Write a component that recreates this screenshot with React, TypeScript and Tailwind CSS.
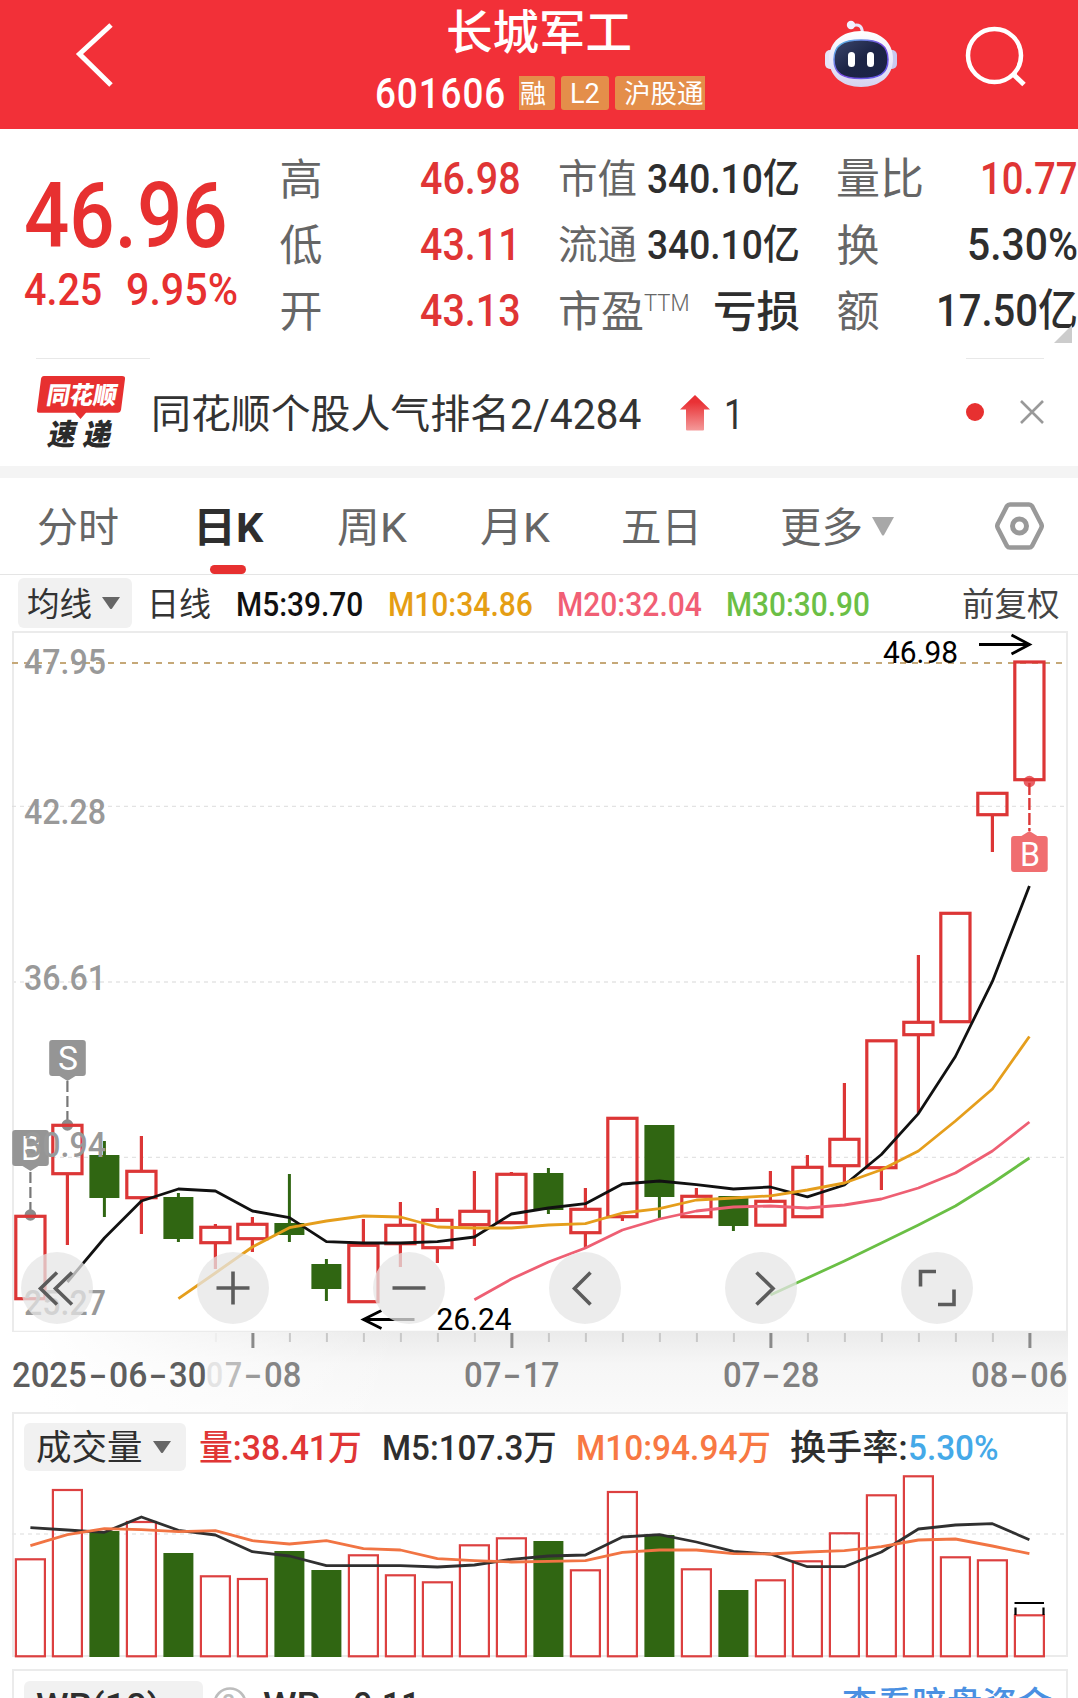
import { useLayoutEffect, useRef, useState } from "react";
import type { ReactNode } from "react";

/* Text condensed or widened to an exact run length. */
function Fit({ w, className = "", children }: { w: number; className?: string; children: ReactNode }) {
  const ref = useRef<HTMLSpanElement>(null);
  const [scale, setScale] = useState(1);
  useLayoutEffect(() => {
    if (ref.current) setScale(w / ref.current.offsetWidth);
  }, [w]);
  return (
    <span className={`block shrink-0 leading-none ${className}`} style={{ width: w }}>
      <span ref={ref} className="inline-block origin-left whitespace-nowrap" style={{ transform: `translateY(0.05em) scaleX(${scale})` }}>
        {children}
      </span>
    </span>
  );
}

const X0 = 30.4;
const STEP = 37;
const cx = (i: number) => X0 + i * STEP;
const pts = (start: number, ys: number[]) => ys.map((y, i) => `${cx(start + i)},${y}`).join(" ");

const RED = "#dc3636";
const GREEN = "#306612";

/* [up, body top, body bottom, wick top, wick bottom] */
const candles: [boolean, number, number, number, number][] = [
  [true, 1215, 1300, 1215, 1300],
  [true, 1124, 1175, 1124, 1245],
  [false, 1155, 1198, 1141, 1217],
  [true, 1170, 1199, 1136, 1234],
  [false, 1197, 1239, 1193, 1242],
  [true, 1226, 1244, 1224, 1269],
  [true, 1223, 1240, 1217, 1252],
  [false, 1223, 1235, 1174, 1242],
  [false, 1264, 1289, 1259, 1301],
  [true, 1244, 1303, 1219, 1303],
  [true, 1224, 1245, 1202, 1267],
  [true, 1219, 1249, 1208, 1263],
  [true, 1210, 1226, 1171, 1246],
  [true, 1173, 1224, 1172, 1224],
  [false, 1173, 1210, 1168, 1214],
  [true, 1208, 1234, 1188, 1247],
  [true, 1117, 1218, 1117, 1221],
  [false, 1125, 1197, 1125, 1218],
  [true, 1195, 1218, 1188, 1218],
  [false, 1196, 1226, 1196, 1231],
  [true, 1200, 1226.5, 1171, 1226.5],
  [true, 1166, 1218, 1155, 1218],
  [true, 1138, 1167, 1083, 1183],
  [true, 1039.5, 1169, 1039.5, 1190],
  [true, 1021, 1036, 955, 1113],
  [true, 912, 1023, 912, 1023],
  [true, 792, 816, 792, 852],
  [true, 660.7, 781, 660.7, 781],
];

const ma5 = [1282, 1238, 1201, 1189, 1191, 1211, 1217.7, 1241.7, 1243, 1243, 1241.7, 1237, 1214, 1208, 1203.7, 1184, 1181, 1184.7, 1189, 1187, 1196.8, 1185, 1154.5, 1113.6, 1056.5, 981.4, 886];
const ma10 = [1298.7, 1273, 1247, 1227.7, 1221, 1216, 1217, 1227, 1228, 1228, 1225, 1223.7, 1213, 1208.7, 1200, 1198, 1195.8, 1190, 1183, 1169.7, 1151, 1121, 1089, 1036.5];
const ma20 = [1299.7, 1279, 1262, 1248, 1230, 1219, 1211, 1207, 1206, 1208, 1205, 1199, 1188, 1173, 1151, 1122];
const ma30 = [1295, 1278, 1261, 1243, 1225, 1206, 1183, 1158];

const volTops = [1558.3, 1489, 1531, 1521, 1553, 1575.3, 1578, 1551, 1570, 1554.3, 1574.3, 1581.3, 1544.3, 1537.3, 1541, 1569.3, 1491, 1535, 1568.3, 1590, 1579.3, 1560.3, 1532.3, 1494.3, 1475.3, 1556.3, 1559.3, 1614.3];
const vol5 = [1527.7, 1530, 1532.3, 1517, 1530.3, 1535, 1551.7, 1556, 1565.7, 1565.7, 1565.7, 1567, 1565, 1559.3, 1556, 1555, 1537, 1534.7, 1542, 1551.3, 1554, 1566.7, 1566.7, 1552, 1529, 1525, 1523.7, 1539.7];
const vol10 = [1545.7, 1534.7, 1528.7, 1529.7, 1531.7, 1530.7, 1540.7, 1544, 1540.7, 1548.7, 1550, 1558.7, 1560.7, 1562, 1561.3, 1560.7, 1552.3, 1550, 1550, 1553.7, 1554, 1552, 1550.7, 1546.7, 1540, 1539, 1546, 1553.7];

function Header() {
  return (
    <header className="flex h-[129px] bg-[#f23038] text-white">
      <div className="w-[375px] pl-[74px] pt-[21px]">
        <svg width="42" height="68" viewBox="74 21 42 68" fill="none" stroke="#fff" strokeWidth="5">
          <path d="M111 25 79.500 54 111 85" />
        </svg>
      </div>
      <div className="flex w-[330px] flex-col">
        <div className="flex h-[62px] items-center pl-[71px]">
          <Fit w={186} className="text-[46.500px] font-medium">长城军工</Fit>
        </div>
        <div className="flex h-[62px] items-center">
          <Fit w={131} className="mb-[4px] text-[43px] font-medium tracking-wide">601606</Fit>
          <div className="ml-[13px] flex gap-[6px]">
            <div className="flex h-[34px] w-[36px] items-center rounded-r-[3px] bg-[#e48e4a] pl-[1px]">
              <Fit w={26} className="text-[26px]">融</Fit>
            </div>
            <div className="flex h-[34px] w-[48px] items-center justify-center rounded-[3px] bg-[#e48e4a]">
              <Fit w={30} className="text-[28px]">L2</Fit>
            </div>
            <div className="flex h-[34px] w-[90px] items-center rounded-l-[3px] bg-[#e48e4a] pl-[9px]">
              <Fit w={80} className="text-[26.500px]">沪股通</Fit>
            </div>
          </div>
        </div>
      </div>
      <div className="flex flex-1 pl-[118px] pt-[19px]">
        <svg width="76" height="74" viewBox="823 19 76 74" fill="none">
          <defs>
            <linearGradient id="shell" x1="0" y1="0" x2="0" y2="1">
              <stop offset="0" stopColor="#ffffff" />
              <stop offset="0.500" stopColor="#eceafa" />
              <stop offset="1" stopColor="#d5d3f0" />
            </linearGradient>
            <linearGradient id="visor" x1="0" y1="0" x2="1" y2="1">
              <stop offset="0" stopColor="#3c466c" />
              <stop offset="0.500" stopColor="#1c2445" />
              <stop offset="1" stopColor="#1b2346" />
            </linearGradient>
            <linearGradient id="glow" x1="0" y1="0" x2="1" y2="1">
              <stop offset="0" stopColor="#55c8e8" />
              <stop offset="0.500" stopColor="#7a4be0" />
              <stop offset="1" stopColor="#5c5ce8" />
            </linearGradient>
          </defs>
          <path d="M853 25.500C859 24 862 26 862.500 33" stroke="#e9e5fa" strokeWidth="3" />
          <circle cx="851" cy="25" r="4.200" fill="#f3f0ff" />
          <rect x="825" y="50" width="12" height="19" rx="5" fill="#e6e4f8" />
          <rect x="885" y="50" width="12" height="19" rx="5" fill="#c9c8ee" />
          <path d="M861 31C880 31 893 42 893 59S880 87 861 87 829 76 829 59 842 31 861 31Z" fill="url(#shell)" />
          <path d="M861 40C879 40 888 45 888 59.500S879 78.500 861 78.500 834 74 834 59.500 843 40 861 40Z" fill="url(#visor)" stroke="url(#glow)" strokeWidth="1.500" />
          <rect x="848" y="52" width="7" height="15" rx="3.500" fill="#fff" />
          <rect x="867" y="52" width="7" height="15" rx="3.500" fill="#fff" />
        </svg>
        <svg className="ml-[64px] mt-[4px]" width="66" height="66" viewBox="963 23 66 66" fill="none" stroke="#fff" strokeWidth="4.500">
          <circle cx="994.500" cy="55.500" r="26.500" />
          <path d="M1013 74 1024 84.500" strokeWidth="5" />
        </svg>
      </div>
    </header>
  );
}

function StatRow({ children }: { children: ReactNode }) {
  return <div className="flex h-[66px] items-center justify-between">{children}</div>;
}

const label = "text-[#666]";
const num = "font-medium";

function Quote() {
  return (
    <section className="relative flex h-[229px] pt-[16px]">
      <div className="w-[280px] pl-[24px] pt-[22px] text-[#e73030]">
        <Fit w={204} className="text-[90px] font-medium">46.96</Fit>
        <div className="flex pt-[9px]">
          <Fit w={78} className="text-[44.500px] font-medium">4.25</Fit>
          <Fit w={112} className="ml-[24px] text-[44.500px] font-medium">9.95%</Fit>
        </div>
      </div>
      <div className="w-[242px]">
        {[["高", "46.98"], ["低", "43.11"], ["开", "43.13"]].map(([k, v]) => (
          <StatRow key={k}>
            <Fit w={43} className={`text-[43px] ${label}`}>{k}</Fit>
            <Fit w={101} className={`mb-[2px] text-[44.500px] text-[#e03535] ${num}`}>{v}</Fit>
          </StatRow>
        ))}
      </div>
      <div className="ml-[37px] w-[243px]">
        {[["市值", "340.10亿"], ["流通", "340.10亿"]].map(([k, v]) => (
          <StatRow key={k}>
            <Fit w={79} className={`text-[39.500px] ${label}`}>{k}</Fit>
            <Fit w={153} className={`mb-[2px] text-[41px] text-[#2e2e2e] ${num}`}>{v}</Fit>
          </StatRow>
        ))}
        <StatRow>
          <div className="flex items-start">
            <Fit w={86} className={`text-[43px] ${label}`}>市盈</Fit>
            <Fit w={46} className={`mt-[1px] text-[24px] font-light ${label}`}>TTM</Fit>
          </div>
          <Fit w={87} className="text-[43px] font-medium text-[#2e2e2e]">亏损</Fit>
        </StatRow>
      </div>
      <div className="ml-[36px] w-[242px]">
        <StatRow>
          <Fit w={88} className={`text-[43.500px] ${label}`}>量比</Fit>
          <Fit w={98} className={`mb-[2px] text-[44.500px] text-[#e03535] ${num}`}>10.77</Fit>
        </StatRow>
        <StatRow>
          <Fit w={43} className={`text-[43px] ${label}`}>换</Fit>
          <Fit w={111} className={`mb-[2px] text-[44.500px] text-[#2e2e2e] ${num}`}>5.30%</Fit>
        </StatRow>
        <StatRow>
          <Fit w={43} className={`text-[43px] ${label}`}>额</Fit>
          <Fit w={142} className={`mb-[2px] text-[44.500px] text-[#2e2e2e] ${num}`}>17.50亿</Fit>
        </StatRow>
      </div>
      <svg className="absolute right-[6px] top-[196px]" width="18" height="18" viewBox="0 0 18 18">
        <path d="M18 0V18H0Z" fill="#ccc" />
      </svg>
    </section>
  );
}

function News() {
  return (
    <section className="flex h-[108px] flex-col">
      <div className="flex h-px justify-between pl-[36px] pr-[34px]">
        <div className="w-[114px] bg-[#e8e8e8]" />
        <div className="w-[78px] bg-[#e8e8e8]" />
      </div>
      <div className="flex h-[107px] items-center">
        <svg className="ml-[36px]" width="90" height="76" viewBox="36 375 90 76" fontFamily="Roboto, 'Noto Sans CJK SC', sans-serif">
          <path d="M44 376H122Q125.500 376 125 379L121 410Q120.500 412.700 118 412.700H86L80.500 419 75 412.700H39Q36.500 412.700 37 410L41 379Q41.500 376 44 376Z" fill="#e73030" />
          <text transform="translate(45.500 403.500) skewX(-10)" fontSize="24.500" fontWeight="900" fill="#fff" textLength="70" lengthAdjust="spacingAndGlyphs">同花顺</text>
          <text transform="translate(46.500 444.500) skewX(-12)" fontSize="29.500" fontWeight="900" fill="#2b2b2b" textLength="28" lengthAdjust="spacingAndGlyphs">速</text>
          <text transform="translate(82 444.500) skewX(-12)" fontSize="29.500" fontWeight="900" fill="#2b2b2b" textLength="28" lengthAdjust="spacingAndGlyphs">递</text>
        </svg>
        <div className="ml-[25px] flex items-center text-[#333]">
          <Fit w={359} className="text-[40px]">同花顺个股人气排名</Fit>
          <Fit w={131} className="text-[42px]">2/4284</Fit>
        </div>
        <svg className="ml-[39px]" width="30" height="36" viewBox="0 0 30 36">
          <defs>
            <linearGradient id="up" x1="0" y1="0" x2="0" y2="1">
              <stop offset="0.200" stopColor="#e93135" />
              <stop offset="1" stopColor="#f49a9a" />
            </linearGradient>
          </defs>
          <path d="M15 0 30 14.500H24V34.500Q24 35.500 23 35.500H7Q6 35.500 6 34.500V14.500H0Z" fill="url(#up)" />
        </svg>
        <Fit w={20} className="ml-[14px] text-[42px] text-[#333]">1</Fit>
        <div className="ml-[222px] mb-[1px] size-[18px] rounded-full bg-[#e73030]" />
        <svg className="mb-[1px] ml-[36px]" width="24" height="24" viewBox="0 0 24 24" stroke="#999" strokeWidth="2.600">
          <path d="M1 1 23 23M23 1 1 23" />
        </svg>
      </div>
    </section>
  );
}

function Tabs() {
  return (
    <nav className="relative flex h-[97px] items-center border-b border-[#e5e5e5] pl-[37px] text-[40.500px] text-[#666]">
      <Fit w={82}>分时</Fit>
      <Fit w={70} className="ml-[74px] font-bold text-[#2e2e2e]">日K</Fit>
      <Fit w={70} className="ml-[74px]">周K</Fit>
      <Fit w={70} className="ml-[73px]">月K</Fit>
      <Fit w={81} className="ml-[71px]">五日</Fit>
      <Fit w={83} className="ml-[78px]">更多</Fit>
      <svg className="ml-[9px]" width="22" height="19" viewBox="0 0 22 19">
        <path d="M0 0H22L12 18Q11 19 10 18Z" fill="#a8a8a8" />
      </svg>
      <svg className="ml-[101px]" width="49" height="48" viewBox="0 0 49 48" fill="none" stroke="#999">
        <path d="M15 2.500H34Q36 2.500 37 4L46 21.500Q47.500 24 46 26.500L37 44Q36 45.500 34 45.500H15Q13 45.500 12 44L3 26.500Q1.500 24 3 21.500L12 4Q13 2.500 15 2.500Z" strokeWidth="4.500" />
        <circle cx="24.500" cy="24" r="7" strokeWidth="5" />
      </svg>
      <div className="absolute bottom-0 left-[210px] h-[9px] w-[36px] rounded-full bg-[#e73030]" />
    </nav>
  );
}

function Caret() {
  return (
    <svg width="18" height="12" viewBox="0 0 18 12">
      <path d="M0 0H18L10 11.500Q9 12.500 8 11.500Z" fill="#666" />
    </svg>
  );
}

function MaBar() {
  return (
    <div className="flex h-[57px] items-center pb-[1px] pl-[18px] text-[32.500px]">
      <div className="flex h-[50px] w-[114px] items-center rounded-[6px] bg-[#f1f1f1] pl-[9px] text-[#333]">
        <Fit w={65}>均线</Fit>
        <div className="ml-[10px]"><Caret /></div>
      </div>
      <Fit w={64} className="ml-[15px] text-[#333]">日线</Fit>
      <Fit w={127} className="ml-[25px] font-medium text-[#111]">M5:39.70</Fit>
      <Fit w={145} className="ml-[25px] font-medium text-[#e59e14]">M10:34.86</Fit>
      <Fit w={145} className="ml-[24px] font-medium text-[#f15f75]">M20:32.04</Fit>
      <Fit w={144} className="ml-[24px] font-medium text-[#6bbf46]">M30:30.90</Fit>
      <Fit w={98} className="ml-[92px] text-[#444]">前复权</Fit>
    </div>
  );
}

function Marker({ x, y, tip, letter, color }: { x: number; y: number; tip: "up" | "down"; letter: string; color: string }) {
  return (
    <g>
      <rect x={x - 18.3} y={y} width="36.600" height="36" rx="3" fill={color} />
      <path d={tip === "up" ? `M${x - 8} ${y}L${x} ${y - 5}L${x + 8} ${y}Z` : `M${x - 8} ${y + 36}L${x} ${y + 41}L${x + 8} ${y + 36}Z`} fill={color} />
      <text x={x - 9.5} y={y + 30} fontSize="33" fill="#fff" textLength="20" lengthAdjust="spacingAndGlyphs">{letter}</text>
    </g>
  );
}

function KChart() {
  return (
    <svg className="block" width="1078" height="701" viewBox="0 631 1078 701" fill="none" fontFamily="Roboto, 'Noto Sans CJK SC', sans-serif">
      <path d="M13 632H1067.500M13 1331.700H1067.500M13 631V1332M1067 631V1332" stroke="#ebebeb" strokeWidth="2" />
      <path d="M12 806.300H1064M12 1157.300H1064" stroke="#dcdcdc" strokeWidth="1" strokeDasharray="4 4" />
      <path d="M12 982H1064" stroke="#ebebeb" strokeWidth="2" strokeDasharray="4 4" />
      <path d="M12 663H1064" stroke="#c5a878" strokeWidth="2" strokeDasharray="6 6" />

      <path d="M30.400 1172V1215M67.400 1081V1124" stroke="#777" strokeWidth="2.200" strokeDasharray="11 4" />
      <circle cx="30.400" cy="1215" r="5.800" fill="#8b8b8b" />
      <circle cx="67.400" cy="1125" r="5.800" fill="#8b8b8b" />
      <circle cx="1029.400" cy="781.500" r="5.800" fill="#ea6065" />
      <Marker x={67.5} y={1040} tip="down" letter="S" color="#959595" />
      <Marker x={30.5} y={1130} tip="down" letter="B" color="#959595" />

      {candles.map(([up, top, bottom, high, low], i) =>
        up ? (
          <g key={i} stroke={RED} strokeWidth="3.200">
            {high < top && <path d={`M${cx(i)} ${high}V${top}`} />}
            {low > bottom && <path d={`M${cx(i)} ${bottom}V${low}`} />}
            <rect x={cx(i) - 14.6} y={top + 1.3} width="29.200" height={bottom - top - 2.6} />
          </g>
        ) : (
          <g key={i}>
            <path d={`M${cx(i)} ${high}V${low}`} stroke={GREEN} strokeWidth="3" />
            <rect x={cx(i) - 15} y={top} width="30" height={bottom - top} fill={GREEN} />
          </g>
        ),
      )}
      <path d="M1029.400 783V831" stroke={RED} strokeWidth="2.400" strokeDasharray="12 3" />
      <Marker x={1029.4} y={836} tip="up" letter="B" color="#f06e70" />

      <g strokeWidth="2.800" strokeLinejoin="round">
        <polyline points={pts(1, ma5)} stroke="#111" />
        <polyline points={pts(4, ma10)} stroke="#e59e1c" />
        <polyline points={pts(12, ma20)} stroke="#ee5f73" />
        <polyline points={pts(20, ma30)} stroke="#6abf45" />
      </g>

      <g fontSize="35" fontWeight="500" fill="#999">
        {([["47.95", 674], ["42.28", 824], ["36.61", 990], ["30.94", 1157], ["25.27", 1315]] as [string, number][]).map(([t, y]) => (
          <text key={t} x="24" y={y} textLength="82" lengthAdjust="spacingAndGlyphs">{t}</text>
        ))}
      </g>
      <g fontSize="31" fill="#000">
        <text x="883" y="663" textLength="75" lengthAdjust="spacingAndGlyphs">46.98</text>
        <text x="436.500" y="1330" textLength="75" lengthAdjust="spacingAndGlyphs">26.24</text>
      </g>
      <g stroke="#000" strokeWidth="2.800">
        <path d="M979 644.500H1029M1011.500 635 1029.500 644.500 1011.500 654" />
        <path d="M414.500 1319.500H364M381.500 1310.500 363.500 1319.500 381.500 1328.500" />
      </g>
    </svg>
  );
}

const controls = [
  "M57 1272.500 40.500 1288.500 57 1304.500M72 1272.500 55.500 1288.500 72 1304.500",
  "M216.500 1288H249.500M233 1271.500V1304.500",
  "M392.500 1288H425.500",
  "M590.500 1272.500 574.500 1288.500 590.500 1304.500",
  "M756.500 1272.500 773 1288.500 756.500 1304.500",
  "M920.500 1286.500V1271.500H936M938 1304.500H954V1289.500",
];

function Controls() {
  return (
    <div className="absolute left-[21px] top-[621px] flex gap-[104px]">
      {controls.map((d, i) => (
        <div key={i} className="size-[72px] rounded-full bg-[#e5e5e5]/75">
          <svg width="72" height="72" viewBox={`${21 + i * 176} 1252 72 72`} fill="none" stroke="#5c5c5c" strokeWidth="3.600">
            <path d={d} />
          </svg>
        </div>
      ))}
    </div>
  );
}

function DateText({ parts, className }: { parts: [string, number, string?][]; className: string }) {
  return (
    <div className={`flex shrink-0 items-center gap-[2px] text-[35.500px] ${className}`}>
      {parts.map(([t, w, tone = ""], i) => (
        <Fit key={i} w={w} className={tone}>{t}</Fit>
      ))}
    </div>
  );
}

function Axis() {
  return (
    <div className="relative mr-[10px] h-[80px] bg-linear-to-b from-[#ebebeb] via-[#f6f6f6] via-40% to-[#fafafa]">
      <div className="absolute inset-y-0 left-0 w-[400px] bg-linear-to-r from-white from-10% to-transparent" />
      <svg className="relative block" width="1068" height="17" viewBox="0 1332 1068 17">
        {Array.from({ length: 23 }, (_, k) => k + 5).map((i) => {
          const major = (i + 1) % 7 === 0;
          return (
            <path key={i} d={`M${cx(i) + 0.5} 1333V${major ? 1348 : 1342}`} stroke={major ? "#8a8a8a" : i === 5 ? "#eee" : "#c8c8c8"} strokeWidth={major ? 3 : 2} />
          );
        })}
      </svg>
      <div className="relative mt-[7px] flex h-[36px] items-center font-medium">
        <DateText className="ml-[12px] text-[#5e5e5e]" parts={[["2025", 75], ["-", 18], ["06", 38], ["-", 18], ["30", 37]]} />
        <DateText
          className="text-[#858585]"
          parts={[["0", 17, "text-[#e4e4e4]"], ["7", 17, "text-[#bcbcbc]"], ["-", 18, "text-[#9a9a9a]"], ["08", 37]]}
        />
        <DateText className="ml-[163px] text-[#808080]" parts={[["07", 37], ["-", 18], ["17", 36]]} />
        <DateText className="ml-[164px] text-[#808080]" parts={[["07", 37], ["-", 18], ["28", 37]]} />
        <DateText className="ml-[152px] text-[#808080]" parts={[["08", 37], ["-", 18], ["06", 37]]} />
      </div>
    </div>
  );
}

function Volume() {
  return (
    <section className="relative">
      <div className="ml-[12px] mr-[10px] flex h-[61px] border-x-2 border-t-2 border-[#ebebeb] pl-[10px] pt-[9px]">
        <div className="flex h-[48px] w-[162px] items-center rounded-[6px] bg-[#f1f1f1] pl-[12px] text-[#2e2e2e]">
          <Fit w={107} className="text-[35.500px]">成交量</Fit>
          <div className="ml-[10px]"><Caret /></div>
        </div>
        <div className="flex h-[48px] items-center text-[35.500px]">
          <Fit w={163} className="ml-[13px] font-medium text-[#e03535]">量:38.41万</Fit>
          <Fit w={175} className="ml-[20px] font-medium text-[#2e2e2e]">M5:107.3万</Fit>
          <Fit w={195} className="ml-[19px] font-medium text-[#f87843]">M10:94.94万</Fit>
          <Fit w={118} className="ml-[19px] font-medium text-[#2e2e2e]">换手率:</Fit>
          <Fit w={91} className="font-medium text-[#45a9e8]">5.30%</Fit>
        </div>
      </div>
      <svg className="block" width="1078" height="187" viewBox="0 1473 1078 187" fill="none">
        <path d="M13 1473V1656M1067 1473V1656M12 1656H1068" stroke="#ebebeb" strokeWidth="2" />
        <path d="M12 1534H1064" stroke="#e8e8e8" strokeWidth="1.600" strokeDasharray="4 4" />
        {volTops.map((y, i) =>
          candles[i][0] ? (
            <rect key={i} x={cx(i) - 14.5} y={y + 1} width="29" height={1657.3 - y - 2} stroke="#dc4040" strokeWidth="2.200" />
          ) : (
            <rect key={i} x={cx(i) - 15} y={y} width="30" height={1657 - y} fill={GREEN} />
          ),
        )}
        <g strokeWidth="2.800" strokeLinejoin="round">
          <polyline points={pts(0, vol5)} stroke="#303030" />
          <polyline points={pts(0, vol10)} stroke="#f17443" />
        </g>
        <path d="M1014.500 1603H1044M1015.500 1607.500V1615M1043.500 1607.500V1615" stroke="#000" strokeWidth="2.200" />
      </svg>
    </section>
  );
}

function WrPanel() {
  return (
    <section className="ml-[12px] mr-[10px] mt-[9px] flex h-[80px] shrink-0 items-start border-x-2 border-t-2 border-[#ebebeb] pl-[10px] pt-[10px]">
      <div className="flex h-[48px] w-[179px] items-center rounded-[6px] bg-[#f1f1f1] pl-[12px] text-[35.500px] text-[#2e2e2e]">
        <Fit w={124} className="font-medium">WR(10)</Fit>
        <div className="ml-[10px]"><Caret /></div>
      </div>
      <svg className="ml-[10px] mt-[6px]" width="34" height="34" viewBox="0 0 34 34" fill="none">
        <circle cx="17" cy="17" r="15.500" stroke="#bdbdbd" strokeWidth="2.600" />
        <text x="9.500" y="26" fontSize="25" fontWeight="500" fill="#bdbdbd" fontFamily="Roboto, sans-serif">?</text>
      </svg>
      <div className="flex h-[45px] flex-1 items-center pl-[16px] text-[35.500px] font-medium text-[#2e2e2e]">
        <Fit w={58}>WR</Fit>
        <Fit w={12} className="ml-[14px] mt-[6px] text-[24px]">1</Fit>
        <Fit w={67} className="ml-[6px]">0.11</Fit>
      </div>
      <div className="mr-[14px] mt-[5px]">
        <Fit w={210} className="text-[35.500px] font-medium text-[#4a90e2]">查看暗盘资金</Fit>
      </div>
    </section>
  );
}

export default function App() {
  return (
    <main className="h-[1698px] w-[1078px] overflow-hidden bg-white font-['Roboto','Noto_Sans_CJK_SC',sans-serif]">
      <Header />
      <Quote />
      <News />
      <div className="h-[12px] bg-[#f4f4f4]" />
      <Tabs />
      <MaBar />
      <div className="relative -mt-[1px]">
        <KChart />
        <Controls />
      </div>
      <Axis />
      <Volume />
      <WrPanel />
    </main>
  );
}
